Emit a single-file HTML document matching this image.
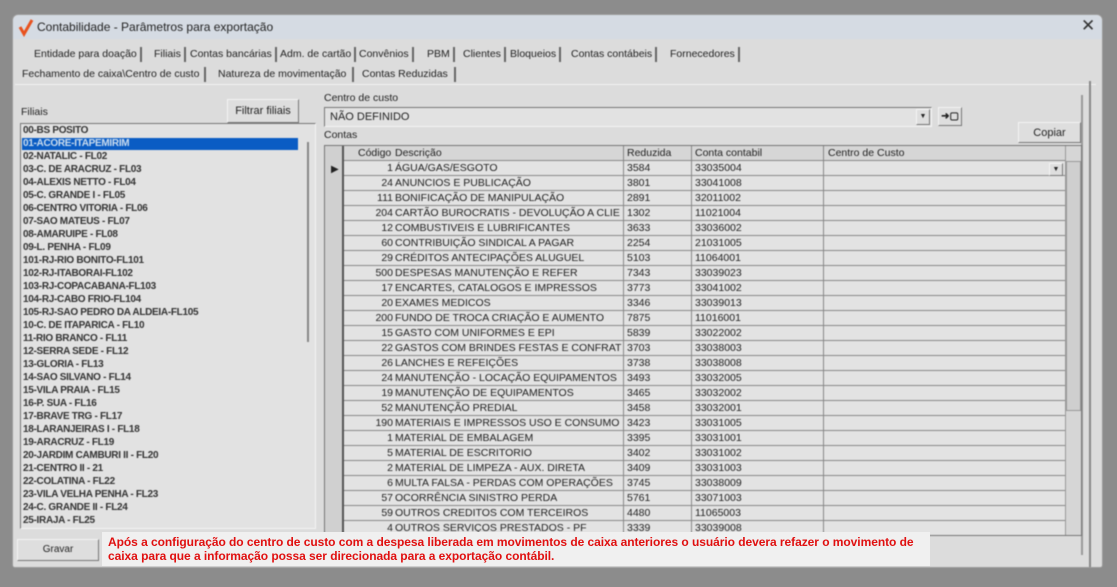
<!DOCTYPE html>
<html><head><meta charset="utf-8"><style>
*{margin:0;padding:0;box-sizing:border-box}
body{width:1117px;height:587px;background:#8c8c8c;position:relative;overflow:hidden;font-family:"Liberation Sans",sans-serif;font-size:11px;color:#222}
.a{position:absolute}
#win{left:12px;top:14px;width:1091px;height:554px;background:#dcdcdc;border:1px solid #9a9a9a;border-radius:6px 6px 3px 3px;filter:blur(0.6px)}
.btn{position:absolute;background:#dedede;border:1px solid;border-color:#f4f4f4 #777 #777 #f4f4f4;text-align:center;font-size:11px}
.tab{position:absolute;font-size:10.5px;white-space:nowrap;border-right:2px solid #666;padding-right:3px;height:15px;line-height:14px}
.li{position:absolute;left:2px;height:13px;line-height:13px;font-size:10px;font-weight:bold;color:#333;white-space:nowrap;letter-spacing:-0.3px}
.row{position:absolute;left:0;width:741px;height:15px;border-bottom:1px solid #8a8a8a}
.row span{position:absolute;top:0;line-height:15px;font-size:10.5px;white-space:nowrap;overflow:hidden}
</style></head><body>
<div id="win" class="a">
 <div class="a" style="left:0;top:0;width:1089px;height:24px;background:#d5dbe3;border-radius:6px 6px 0 0"></div>
 <svg class="a" style="left:5px;top:4px" width="16" height="18"><path d="M2 8 L6 15 L14 1" stroke="#e8521f" stroke-width="3" fill="none"/></svg>
 <div class="a" style="left:24px;top:5px;font-size:12px;color:#222">Contabilidade - Parâmetros para exportação</div>
 <div class="a" style="left:1068px;top:1px;font-size:17px;color:#333">✕</div>
 <div class="tab" style="left:21px;top:32px">Entidade para doação</div>
 <div class="tab" style="left:141px;top:32px">Filiais</div>
 <div class="tab" style="left:177px;top:32px">Contas bancárias</div>
 <div class="tab" style="left:267px;top:32px">Adm. de cartão</div>
 <div class="tab" style="left:346px;top:32px">Convênios</div>
 <div class="tab" style="left:414px;top:32px">PBM</div>
 <div class="tab" style="left:450px;top:32px">Clientes</div>
 <div class="tab" style="left:497px;top:32px">Bloqueios</div>
 <div class="tab" style="left:558px;top:32px">Contas contábeis</div>
 <div class="tab" style="left:657px;top:32px">Fornecedores</div>
 <div class="tab" style="left:9px;top:52px;width:184px">Fechamento de caixa\Centro de custo</div>
 <div class="tab" style="left:205px;top:52px;width:136px">Natureza de movimentação</div>
 <div class="tab" style="left:349px;top:52px;width:94px">Contas Reduzidas</div>
 <div class="a" style="left:2px;top:69px;width:1081px;height:1px;background:#f2f2f2"></div>
 <div class="a" style="left:1076px;top:66px;width:2px;height:486px;background:#888"></div>
 <div class="a" style="left:1068px;top:80px;width:2px;height:460px;background:#999"></div>
 <div class="a" style="left:8px;top:91px;font-size:10.5px">Filiais</div>
 <div class="btn" style="left:214px;top:84px;width:72px;height:24px;line-height:22px">Filtrar filiais</div>
 <div class="a" style="left:7px;top:108px;width:296px;height:406px;background:#e2e2e2;border:1px solid;border-color:#777 #f4f4f4 #f4f4f4 #777">
  <div class="a" style="left:286px;top:18px;width:2px;height:200px;background:#888"></div>
  <div class="a" style="left:1px;top:14px;width:276px;height:12px;background:#0a5cc4"></div>
  <div class="li" style="top:0">00-BS POSITO</div>
  <div class="li" style="top:13px;color:#cde">01-ACORE-ITAPEMIRIM</div>
  <div class="li" style="top:26px">02-NATALIC - FL02</div>
  <div class="li" style="top:39px">03-C. DE ARACRUZ - FL03</div>
  <div class="li" style="top:52px">04-ALEXIS NETTO - FL04</div>
  <div class="li" style="top:65px">05-C. GRANDE I - FL05</div>
  <div class="li" style="top:78px">06-CENTRO VITORIA - FL06</div>
  <div class="li" style="top:91px">07-SAO MATEUS - FL07</div>
  <div class="li" style="top:104px">08-AMARUIPE - FL08</div>
  <div class="li" style="top:117px">09-L. PENHA - FL09</div>
  <div class="li" style="top:130px">101-RJ-RIO BONITO-FL101</div>
  <div class="li" style="top:143px">102-RJ-ITABORAI-FL102</div>
  <div class="li" style="top:156px">103-RJ-COPACABANA-FL103</div>
  <div class="li" style="top:169px">104-RJ-CABO FRIO-FL104</div>
  <div class="li" style="top:182px">105-RJ-SAO PEDRO DA ALDEIA-FL105</div>
  <div class="li" style="top:195px">10-C. DE ITAPARICA - FL10</div>
  <div class="li" style="top:208px">11-RIO BRANCO - FL11</div>
  <div class="li" style="top:221px">12-SERRA SEDE - FL12</div>
  <div class="li" style="top:234px">13-GLORIA - FL13</div>
  <div class="li" style="top:247px">14-SAO SILVANO - FL14</div>
  <div class="li" style="top:260px">15-VILA PRAIA - FL15</div>
  <div class="li" style="top:273px">16-P. SUA - FL16</div>
  <div class="li" style="top:286px">17-BRAVE TRG - FL17</div>
  <div class="li" style="top:299px">18-LARANJEIRAS I - FL18</div>
  <div class="li" style="top:312px">19-ARACRUZ - FL19</div>
  <div class="li" style="top:325px">20-JARDIM CAMBURI II - FL20</div>
  <div class="li" style="top:338px">21-CENTRO II - 21</div>
  <div class="li" style="top:351px">22-COLATINA - FL22</div>
  <div class="li" style="top:364px">23-VILA VELHA PENHA - FL23</div>
  <div class="li" style="top:377px">24-C. GRANDE II - FL24</div>
  <div class="li" style="top:390px">25-IRAJA - FL25</div>
 </div>
 <div class="a" style="left:311px;top:77px;font-size:10.5px">Centro de custo</div>
 <div class="a" style="left:311px;top:92px;width:608px;height:20px;background:#e2e2e2;border:1px solid;border-color:#777 #f4f4f4 #f4f4f4 #777;padding:3px 5px;font-size:11px">NÃO DEFINIDO
  <div class="btn" style="right:1px;top:1px;width:14px;height:16px;font-size:7px;line-height:14px">▼</div></div>
 <div class="btn" style="left:925px;top:92px;width:24px;height:19px;font-size:10px;line-height:17px;font-weight:bold">➜▢</div>
 <div class="btn" style="left:1005px;top:107px;width:63px;height:21px;line-height:20px">Copiar</div>
 <div class="a" style="left:311px;top:114px;font-size:10.5px">Contas</div>
 <div class="a" style="left:311px;top:130px;width:758px;height:391px;background:#d8d8d8;border:1px solid #777;overflow:hidden">
  <div class="a" style="left:0;top:0;width:741px;height:15px;background:#d6d6d6;border-bottom:1px solid #888">
   <span class="a" style="left:33px;top:1px;font-size:10.5px">Código</span>
   <span class="a" style="left:70px;top:1px;font-size:10.5px">Descrição</span>
   <span class="a" style="left:302px;top:1px;font-size:10.5px">Reduzida</span>
   <span class="a" style="left:370px;top:1px;font-size:10.5px">Conta contabil</span>
   <span class="a" style="left:503px;top:1px;font-size:10.5px">Centro de Custo</span>
  </div>
  <div id="rows" class="a" style="left:0;top:15px;width:741px;height:380px;background:#e3e3e3"></div>
  <div class="a" style="left:0;top:0;width:19px;height:391px;background:#d0d0d0;border-right:2px solid #555"></div>
  <div class="a" style="left:298px;top:0;width:1px;height:391px;background:#888"></div>
  <div class="a" style="left:366px;top:0;width:1px;height:391px;background:#888"></div>
  <div class="a" style="left:498px;top:0;width:1px;height:391px;background:#888"></div>
  <div class="a" style="left:740px;top:0;width:17px;height:391px;background:#d6d6d6;border-left:1px solid #999"></div>
  <div class="a" style="left:741px;top:15px;width:15px;height:250px;background:#cfcfcf;border:1px solid #999"></div>
  <div class="btn" style="left:724px;top:17px;width:14px;height:13px;font-size:7px;line-height:11px">▼</div>
  <div class="a" style="left:6px;top:18px;font-size:10px">▶</div>
 </div>
 <div class="btn" style="left:4px;top:524px;width:82px;height:22px;line-height:20px;font-size:10px">Gravar</div>
</div>
<div class="a" style="left:102px;top:532px;width:828px;height:34px;background:#f0f0f0;color:#e01010;font-size:12px;line-height:14px;padding:3px 6px;font-weight:bold;white-space:nowrap;letter-spacing:-0.05px">Após a configuração do centro de custo com a despesa liberada em movimentos de caixa anteriores o usuário devera refazer o movimento de<br>caixa para que a informação possa ser direcionada para a exportação contábil.</div>
<script>
var d=[["1","ÁGUA/GAS/ESGOTO","3584","33035004"],["24","ANUNCIOS E PUBLICAÇÃO","3801","33041008"],["111","BONIFICAÇÃO DE MANIPULAÇÃO","2891","32011002"],["204","CARTÃO BUROCRATIS - DEVOLUÇÃO A CLIE","1302","11021004"],["12","COMBUSTIVEIS E LUBRIFICANTES","3633","33036002"],["60","CONTRIBUIÇÃO SINDICAL A PAGAR","2254","21031005"],["29","CRÉDITOS ANTECIPAÇÕES ALUGUEL","5103","11064001"],["500","DESPESAS MANUTENÇÃO E REFER","7343","33039023"],["17","ENCARTES, CATALOGOS E IMPRESSOS","3773","33041002"],["20","EXAMES MEDICOS","3346","33039013"],["200","FUNDO DE TROCA CRIAÇÃO E AUMENTO","7875","11016001"],["15","GASTO COM UNIFORMES E EPI","5839","33022002"],["22","GASTOS COM BRINDES FESTAS E CONFRAT","3703","33038003"],["26","LANCHES E REFEIÇÕES","3738","33038008"],["24","MANUTENÇÃO - LOCAÇÃO EQUIPAMENTOS","3493","33032005"],["19","MANUTENÇÃO DE EQUIPAMENTOS","3465","33032002"],["52","MANUTENÇÃO PREDIAL","3458","33032001"],["190","MATERIAIS E IMPRESSOS USO E CONSUMO","3423","33031005"],["1","MATERIAL DE EMBALAGEM","3395","33031001"],["5","MATERIAL DE ESCRITORIO","3402","33031002"],["2","MATERIAL DE LIMPEZA - AUX. DIRETA","3409","33031003"],["6","MULTA FALSA - PERDAS COM OPERAÇÕES","3745","33038009"],["57","OCORRÊNCIA SINISTRO PERDA","5761","33071003"],["59","OUTROS CREDITOS COM TERCEIROS","4480","11065003"],["4","OUTROS SERVIÇOS PRESTADOS - PF","3339","33039008"]];
var h="";d.forEach(function(r,i){h+='<div class="row" style="top:'+(i*15)+'px"><span style="left:20px;width:48px;text-align:right">'+r[0]+'</span><span style="left:70px;width:227px">'+r[1]+'</span><span style="left:302px">'+r[2]+'</span><span style="left:370px">'+r[3]+'</span></div>';});
document.getElementById("rows").innerHTML=h;
</script>
</body></html>
